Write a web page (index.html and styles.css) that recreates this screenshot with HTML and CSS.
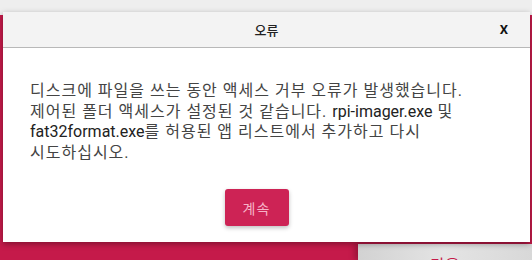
FILE: index.html
```html
<!DOCTYPE html>
<html lang="ko">
<head>
  <meta charset="UTF-8">
  <meta name="viewport" content="width=device-width, initial-scale=1.0">
  <title>오류</title>
  <link rel="stylesheet" href="styles.css">
</head>
<body>
  <div class="app">
    <div class="app-top"></div>
    <div class="app-main">
      <button class="next">다음</button>
    </div>
  </div>

  <div class="dialog">
    <div class="dialog-head">
      <span class="dialog-title">오류</span>
      <span class="dialog-close">X</span>
    </div>
    <div class="dialog-body">
      <p class="message">디스크에 파일을 쓰는 동안 액세스 거부 오류가 발생했습니다. 제어된 폴더 액세스가 설정된 것 같습니다. <span class="file">rpi-imager.exe</span> 및 <span class="file">fat32format.exe</span>를 허용된 앱 리스트에서 추가하고 다시 시도하십시오.</p>
      <div class="actions">
        <button class="continue">계속</button>
      </div>
    </div>
  </div>
</body>
</html>
```

FILE: styles.css
```css
body {
  margin: 0;
  width: 532px;
  height: 260px;
  overflow: hidden;
  font-family: Roboto, "Noto Sans CJK KR", sans-serif;
  background: #c51a4a;
}
.app { height: 260px; display: flex; flex-direction: column; }
.app-top { height: 15px; background: #eeeeee; }
.app-main {
  flex: 1;
  background: #c51a4a;
  display: flex;
  justify-content: flex-end;
  align-items: flex-end;
}
.next {
  width: 174px;
  height: 16px;
  border: none;
  padding: 14px 0 0;
  background: linear-gradient(90deg, #d2d2d2, #e4e4e4 50%, #d8d8d8);
  color: #c51a4a;
  font-family: Roboto, "Noto Sans CJK KR", sans-serif;
  font-size: 16px;
  line-height: 16px;
  overflow: hidden;
  box-shadow: -3px 0 6px rgba(0,0,0,0.25);
}

.dialog {
  position: absolute;
  left: 3px;
  top: 12px;
  width: 527px;
  height: 230px;
  background: white;
  box-shadow: 0 2px 6px rgba(0,0,0,0.35);
  display: flex;
  flex-direction: column;
}
.dialog-head {
  height: 35px;
  background: #f3f3f3;
  border-bottom: 1px solid #b8b8b8;
  display: flex;
  align-items: center;
  justify-content: center;
  position: relative;
}
.dialog-title { font-size: 13px; font-weight: 500; color: #222; }
.dialog-close {
  position: absolute;
  right: 22px;
  top: 10px;
  font-size: 13px;
  font-weight: bold;
  color: #111;
}
.dialog-body { padding: 33px 35px 0 27px; }
.message {
  margin: 0;
  font-size: 16px;
  line-height: 20.5px;
  letter-spacing: 1px;
  word-break: keep-all;
  color: #444;
}
.message .file { letter-spacing: 0; color: #222; }
.actions {
  display: flex;
  justify-content: center;
  margin-top: 26px;
  padding-right: 12px;
}
.continue {
  width: 64px;
  height: 37px;
  border: none;
  border-radius: 3px;
  background: #cd2355;
  color: #f6b3c7;
  font-family: Roboto, "Noto Sans CJK KR", sans-serif;
  font-size: 14px;
  letter-spacing: 1px;
  box-shadow: 0 2px 4px rgba(0,0,0,0.25);
}
```
